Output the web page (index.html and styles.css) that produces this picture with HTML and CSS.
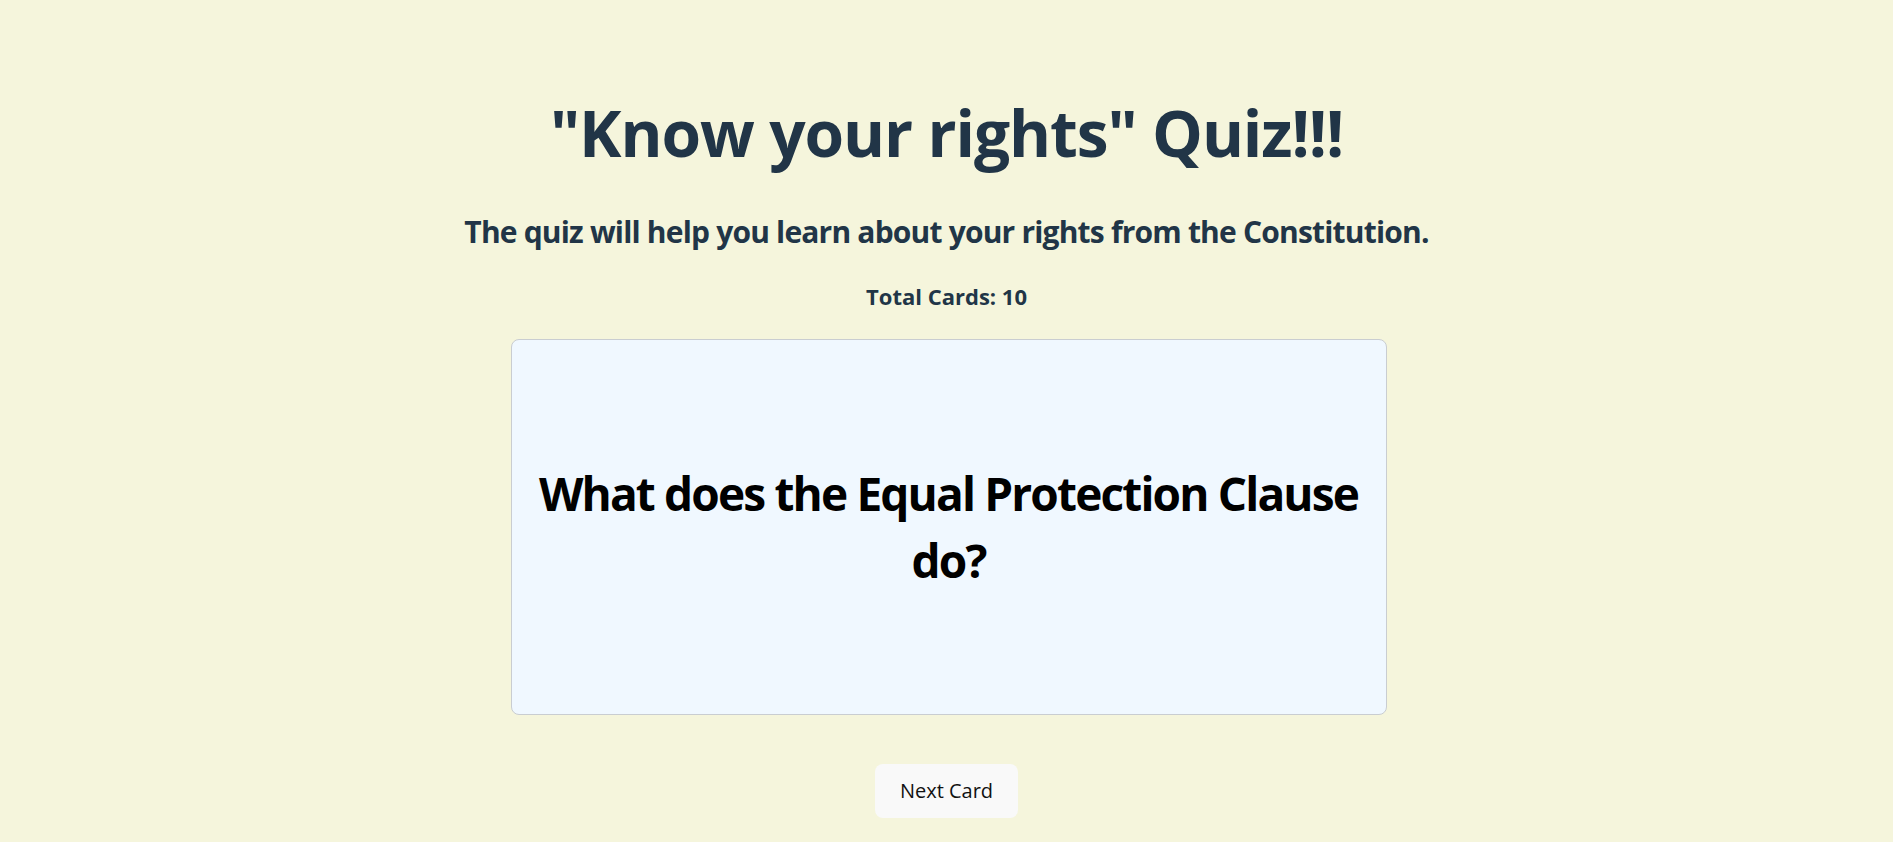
FILE: index.html
```html
<!DOCTYPE html>
<html lang="en">
<head>
<meta charset="utf-8">
<title>Know your rights Quiz</title>
<link rel="stylesheet" href="styles.css">
</head>
<body>
<main class="app">
  <h1 class="title">"Know your rights" Quiz!!!</h1>
  <h2 class="subtitle">The quiz will help you learn about your rights from the Constitution.</h2>
  <h3 class="count">Total Cards: 10</h3>
  <div class="card">
    <p class="question">What does the Equal Protection Clause do?</p>
  </div>
  <button class="next">Next Card</button>
</main>
</body>
</html>
```

FILE: styles.css
```css
html, body {
  margin: 0;
  padding: 0;
}
body {
  background: #f5f5dc;
  color: #213547;
  font-family: "Open Sans", "Noto Sans", sans-serif;
}
.app {
  display: flex;
  flex-direction: column;
  align-items: center;
  text-align: center;
}
.title {
  margin: 98px 0 0;
  font-size: 64px;
  line-height: 1.1;
  font-weight: 700;
  letter-spacing: -0.017em;
}
.subtitle {
  margin: 41px 0 0;
  font-size: 30px;
  line-height: 1.5;
  font-weight: 700;
  letter-spacing: -0.027em;
}
.count {
  margin: 26px 0 0;
  font-size: 22px;
  line-height: 1.5;
  font-weight: 700;
}
.card {
  margin: 26px 0 0 4px;
  width: 874px;
  height: 374px;
  box-sizing: content-box;
  background: #f0f8ff;
  border: 1px solid #c9cdd1;
  border-radius: 8px;
  display: flex;
  align-items: center;
  justify-content: center;
  padding: 0;
}
.question {
  margin: 0;
  padding: 0 4px;
  color: #000;
  font-size: 46px;
  line-height: 67.5px;
  font-weight: 700;
  letter-spacing: -0.04em;
}
.next {
  margin-top: 49px;
  font-family: inherit;
  font-size: 20px;
  line-height: 1.5;
  font-weight: 500;
  color: #111;
  background: #f9f9f9;
  border: 1px solid transparent;
  border-radius: 8px;
  padding: 11px 24px;
  cursor: pointer;
}
```
